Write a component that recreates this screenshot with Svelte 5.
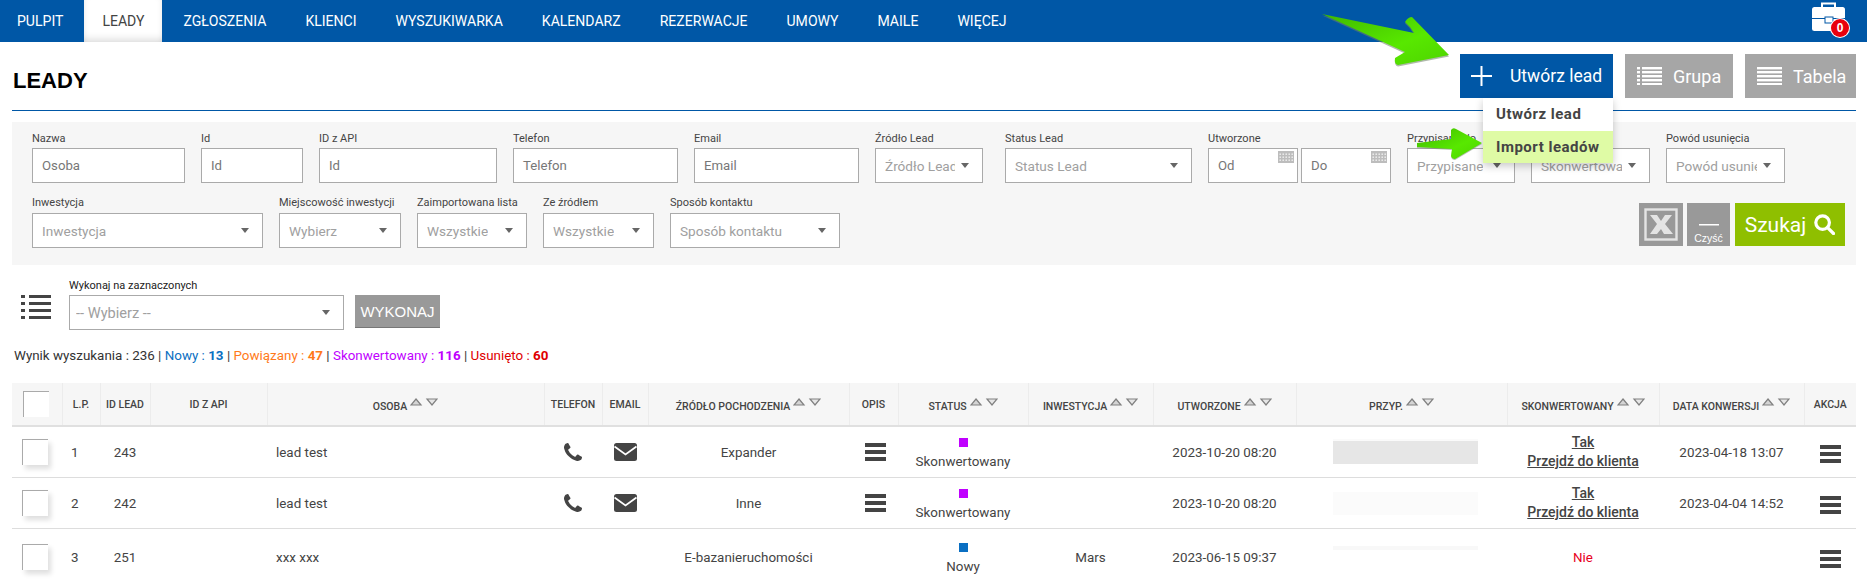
<script>
  const tabs = ['PULPIT','LEADY','ZGŁOSZENIA','KLIENCI','WYSZUKIWARKA','KALENDARZ','REZERWACJE','UMOWY','MAILE','WIĘCEJ'];
  const row1 = [
    {l:'Nazwa',p:'Osoba',w:153},{l:'Id',p:'Id',w:102},{l:'ID z API',p:'Id',w:178},{l:'Telefon',p:'Telefon',w:165},{l:'Email',p:'Email',w:165},
    {l:'Źródło Lead',p:'Źródło Lead',w:108,s:1},{l:'Status Lead',p:'Status Lead',w:187,s:1,cls:'push'}
  ];
  const row1b = [
    {l:'Przypisane do',p:'Przypisane',w:108,s:1},{l:'Skonwertowany',p:'Skonwertowany',w:119,s:1},{l:'Powód usunięcia',p:'Powód usunięcia',w:119,s:1}
  ];
  const row2 = [
    {l:'Inwestycja',p:'Inwestycja',w:231,s:1},{l:'Miejscowość inwestycji',p:'Wybierz',w:122,s:1},{l:'Zaimportowana lista',p:'Wszystkie',w:110,s:1},{l:'Ze źródłem',p:'Wszystkie',w:111,s:1},{l:'Sposób kontaktu',p:'Sposób kontaktu',w:170,s:1}
  ];
  const cols = [50,38,50,117,277,58,46,201,49,130,125,143,211,152,145,52];
  const heads = [
    {t:''},{t:'L.P.'},{t:'ID LEAD'},{t:'ID Z API'},{t:'OSOBA',s:1},{t:'TELEFON'},{t:'EMAIL'},{t:'ŹRÓDŁO POCHODZENIA',s:1},{t:'OPIS'},
    {t:'STATUS',s:1},{t:'INWESTYCJA',s:1},{t:'UTWORZONE',s:1},{t:'PRZYP.',s:1},{t:'SKONWERTOWANY',s:1},{t:'DATA KONWERSJI',s:1},{t:'AKCJA'}
  ];
  const rows = [
    {n:1,id:243,name:'lead test',contact:true,src:'Expander',opis:true,st:'Skonwertowany',c:'purple',inv:'',date:'2023-10-20 08:20',conv:true,cd:'2023-04-18 13:07',mask:'m1'},
    {n:2,id:242,name:'lead test',contact:true,src:'Inne',opis:true,st:'Skonwertowany',c:'purple',inv:'',date:'2023-10-20 08:20',conv:true,cd:'2023-04-04 14:52',mask:'m2'},
    {n:3,id:251,name:'xxx xxx',contact:false,src:'E-bazanieruchomości',opis:false,st:'Nowy',c:'azure',inv:'Mars',date:'2023-06-15 09:37',conv:false,cd:'',mask:'m3'}
  ];
</script>

{#snippet field(f)}
  <div class="field {f.cls || ''}" style="width:{f.w}px">
    <span class="lab">{f.l}</span>
    {#if f.s}
      <div class="inp sel"><span class="val">{f.p}</span><i class="caret"></i></div>
    {:else}
      <div class="inp"><span class="ph">{f.p}</span></div>
    {/if}
  </div>
{/snippet}

{#snippet bars(cls)}
  <svg class={cls} width="21" height="18" viewBox="0 0 21 18"><rect y="0" width="21" height="4" fill="#444"/><rect y="7" width="21" height="4" fill="#444"/><rect y="14" width="21" height="4" fill="#444"/></svg>
{/snippet}

{#snippet listIcon(w, bullets)}
  <svg width={w} height="18" viewBox="0 0 25 18" fill="#fff">
    {#each [0,4,8,12,16] as y}
      {#if bullets}
        <rect x="0" y={y} width="3" height="2.4"/><rect x="5" y={y} width="20" height="2.4"/>
      {:else}
        <rect x="0" y={y} width="25" height="2.4"/>
      {/if}
    {/each}
  </svg>
{/snippet}

<div class="page">
  <nav class="nav">
    {#each tabs as t}
      <a class="tab" class:active={t==='LEADY'} href="#top">{t}</a>
    {/each}
    <div class="case">
      <svg width="33" height="30" viewBox="0 0 33 30">
        <path d="M10 6V1.500h13V6" fill="none" stroke="#fff" stroke-width="2"/>
        <rect x="0" y="5" width="33" height="24" rx="2.5" fill="#fff"/>
        <rect x="0" y="16" width="33" height="1" fill="#0057a6"/>
        <rect x="13" y="15" width="8" height="6" fill="#fff" stroke="#0057a6" stroke-width="1"/>
      </svg>
      <span class="badge">0</span>
    </div>
  </nav>

  <div class="wrap">
    <header class="head">
      <h1>LEADY</h1>
      <div class="actions">
        <button class="big primary">
          <svg width="21" height="20" viewBox="0 0 21 20"><rect x="0" y="9" width="21" height="2" fill="#fff"/><rect x="9.5" y="0" width="2" height="20" fill="#fff"/></svg>
          <span class="utw">Utwórz lead</span>
        </button>
        <button class="big grey g1">{@render listIcon(25,true)}<span>Grupa</span></button>
        <button class="big grey g2">{@render listIcon(25,false)}<span>Tabela</span></button>
      </div>
    </header>

    <section class="filters">
      <div class="frow">
        {#each row1 as f}{@render field(f)}{/each}
        <div class="field dates">
          <span class="lab">Utworzone</span>
          <div class="dpair">
            {#each ['Od','Do'] as d}
              <div class="inp date"><span class="ph">{d}</span>
                <svg class="cal" width="16" height="12" viewBox="0 0 16 12">
                  <rect width="16" height="12" fill="#bdbdbd"/>
                  {#each [2,5,8,11,14] as x}{#each [3,6,9] as y}<rect x={x-0.5} y={y-0.5} width="1.4" height="1.4" fill="#f4f4f4"/>{/each}{/each}
                </svg>
              </div>
            {/each}
          </div>
        </div>
        {#each row1b as f}{@render field(f)}{/each}
      </div>
      <div class="frow second">
        {#each row2 as f}{@render field(f)}{/each}
        <div class="fbtns">
          <button class="sq xl" aria-label="Excel">
            <svg width="34" height="33" viewBox="0 0 34 33">
              <rect x="1.5" y="1.5" width="31" height="30" fill="none" stroke="#e4e4e4" stroke-width="2.4"/>
              <path d="M6 7h7l4 6 4-6h7l-7 9 8 10H20l-3-5-4 5H6l7-10z" fill="#e4e4e4"/>
            </svg>
          </button>
          <button class="sq clr"><i></i><span>Czyść</span></button>
          <button class="szukaj">Szukaj
            <svg width="21" height="21" viewBox="0 0 21 21" fill="none" stroke="#fff" stroke-width="3.2"><circle cx="8.6" cy="8.6" r="6.8"/><path d="M13.6 13.6L19.5 19.5" stroke-linecap="round"/></svg>
          </button>
        </div>
      </div>
    </section>

    <section class="bulk">
      <svg class="bicon" width="30" height="24" viewBox="0 0 30 24" fill="#444">
        {#each [0,7,14,21] as y}<rect x="0" y={y} width="4" height="3"/><rect x="8" y={y} width="22" height="3"/>{/each}
      </svg>
      <div class="field bfield">
        <span class="lab dark">Wykonaj na zaznaczonych</span>
        <div class="inp sel"><span class="val">-- Wybierz --</span><i class="caret"></i></div>
      </div>
      <button class="exec">WYKONAJ</button>
    </section>

    <p class="summary">
      Wynik wyszukania : 236 | <span class="cb">Nowy : <b>13</b></span> | <span class="co">Powiązany : <b>47</b></span> | <span class="cp">Skonwertowany : <b>116</b></span> | <span class="cr">Usunięto : <b>60</b></span>
    </p>

    <table class="tbl">
      <colgroup>{#each cols as c}<col style="width:{c}px">{/each}</colgroup>
      <thead>
        <tr>
          {#each heads as h, i}
            <th>
              {#if i===0}<span class="cb0 hcb"></span>
              {:else if h.s}
                <span class="sortable"><span class="st">{h.t}</span>
                  <svg width="28" height="8" viewBox="0 0 28 8">
                    <path d="M6 1L11 7H1z" fill="#d4d4d4" stroke="#808080" stroke-width="1.2"/>
                    <path d="M17 1H27L22 7z" fill="#e6e6e6" stroke="#808080" stroke-width="1.2"/>
                  </svg>
                </span>
              {:else}{h.t}{/if}
            </th>
          {/each}
        </tr>
      </thead>
      <tbody>
        {#each rows as r}
          <tr class:last={r.n===3}>
            <td class="cc"><span class="cb0 rcb"></span></td>
            <td class="lp">{r.n}</td>
            <td class="ctr">{r.id}</td>
            <td></td>
            <td class="nm">{r.name}</td>
            <td class="ctr">
              {#if r.contact}
                <svg class="ph-i" width="18" height="18" viewBox="192 128 1408 1408"><path d="M1600 1240q0 27-10 70.500t-21 68.500q-21 50-122 106-94 51-186 51-27 0-53-3.500t-57.500-12.500-47-14.500-55.500-20.500-49-18q-98-35-175-83-127-79-264-216t-216-264q-48-77-83-175-3-9-18-49t-20.500-55.500-14.500-47-12.500-57.500-3.500-53q0-92 51-186 56-101 106-122 25-11 68.500-21t70.500-10q14 0 21 3 18 6 53 76 11 19 30 54t35 63.500 31 53.500q3 4 17.500 25t21.500 35.500 7 28.500q0 20-28.500 50t-62 55-62 53-28.500 46q0 9 5 22.500t8.500 20.500 14 24 11.500 19q76 137 174 235t235 174q2 1 19 11.500t24 14 20.500 8.500 22.500 5q18 0 46-28.500t53-62 55-62 50-28.500q14 0 28.500 7t35.500 21.500 25 17.500q25 15 53.500 31t63.500 35 54 30q70 35 76 53 3 7 3 21z" fill="#444"/></svg>
              {/if}
            </td>
            <td class="ctr">
              {#if r.contact}
                <svg class="env" width="23" height="18" viewBox="0 0 23 18"><rect width="23" height="18" rx="2.5" fill="#444"/><path d="M0.500 3.500L11.500 11.500L22.500 3.500" fill="none" stroke="#fff" stroke-width="1.8"/></svg>
              {/if}
            </td>
            <td class="ctr">{r.src}</td>
            <td class="ctr ob-c">{#if r.opis}{@render bars('ob')}{/if}</td>
            <td class="ctr stat"><i class={r.c}></i><span>{r.st}</span></td>
            <td class="ctr">{r.inv}</td>
            <td class="ctr">{r.date}</td>
            <td class="ctr"><div class="mask {r.mask}"></div></td>
            <td class="ctr">
              {#if r.conv}<a class="tak" href="#top">Tak</a><a class="tak" href="#top">Przejdź do klienta</a>
              {:else}<span class="nie">Nie</span>{/if}
            </td>
            <td class="ctr">{r.cd}</td>
            <td class="ctr">{@render bars('ab')}</td>
          </tr>
        {/each}
      </tbody>
    </table>
  </div>

  <div class="menu">
    <div class="mi">Utwórz lead</div>
    <div class="mi on">Import leadów</div>
  </div>

  <svg class="arrows" width="1867" height="585" viewBox="0 0 1867 585">
    <defs>
      <linearGradient id="ga" x1="0" y1="0" x2="1" y2="1"><stop offset="0" stop-color="#3fb800"/><stop offset="0.6" stop-color="#58e800"/><stop offset="1" stop-color="#4ed400"/></linearGradient>
    </defs>
    <path d="M1322 14L1414 33Q1410 26 1405 22Q1408 17 1412 17L1449 55L1398 65Q1394 64 1395 58L1405 52Z" fill="#6f7f66" opacity=".55" transform="translate(0 1.500)"/>
    <path d="M1322 14L1414 33Q1410 26 1405 22Q1408 17 1412 17L1449 55L1398 65Q1394 64 1395 58L1405 52Z" fill="url(#ga)"/>
    <path d="M1417 143L1451 139L1451 130Q1453 127 1456 129L1482 143L1455 159Q1452 159 1451 156L1452 149L1417 147Z" fill="#6f7f66" opacity=".5" transform="translate(0 1)"/>
    <path d="M1417 143L1451 139L1451 130Q1453 127 1456 129L1482 143L1455 159Q1452 159 1451 156L1452 149L1417 147Z" fill="url(#ga)"/>
  </svg>
</div>

<style>
  :global(body){margin:0;overflow:hidden;background:#fff}
  .page{position:relative;width:1867px;height:585px;overflow:hidden;font-family:Roboto,"Liberation Sans",Arial,sans-serif;color:#444}
  .nav{display:flex;gap:3px;height:42px;background:#0057a6}
  .tab{padding:0 18px;line-height:42px;font-size:14.05px;color:#fff;text-decoration:none}
  .tab:first-child{padding-left:17px}
  .tab.active{background:#fff;color:#444;box-shadow:inset 0 -8px 8px -6px rgba(0,0,0,.16),inset 5px 0 6px -5px rgba(0,0,0,.08),inset -5px 0 6px -5px rgba(0,0,0,.08)}
  .case{position:relative;margin-left:auto;margin-right:22px;padding-top:2px}
  .badge{position:absolute;left:19px;top:19px;width:18px;height:18px;border-radius:50%;background:#e8000d;color:#fff;font:bold 12px/18px "Liberation Sans",sans-serif;text-align:center;box-shadow:0 0 0 1px #fff}

  .wrap{padding:0 11px 0 12px}
  .head{display:flex;justify-content:space-between;align-items:center;padding:12px 0 12px 1px;border-bottom:1px solid #0057a6;margin-bottom:11px}
  h1{margin:0;padding-top:9px;font:bold 22px/26px "Liberation Sans",sans-serif;color:#000}
  .actions{display:flex;gap:12px}
  .big{display:flex;align-items:center;height:44px;border:0;color:#fff;font:18px Roboto,sans-serif;padding:0}
  .primary{width:153px;background:#0057a6;padding-left:11px}
  .utw{margin-left:18px;font-size:17.5px}
  .grey{background:#a6a6a6;padding-left:12px}
  .g1{width:108px}
  .g2{width:111px}
  .grey span{margin-left:11px}

  .filters{background:#f6f6f6;height:143px;box-sizing:border-box;padding:10px 11px 0 20px}
  .frow{display:flex;gap:16px}
  .second{margin-top:13px;position:relative}
  .second .lab{margin-bottom:4px}
  .field{display:flex;flex-direction:column;flex:none}
  .push{margin-left:6px}
  .lab{font-size:11px;line-height:13px;margin-bottom:3px;color:#444;white-space:nowrap}
  .lab.dark{color:#222}
  .inp{box-sizing:border-box;height:35px;border:1px solid #aaa;background:#fff;display:flex;align-items:center;padding-left:9px;font-size:13.2px;position:relative;white-space:nowrap;overflow:hidden}
  .ph{color:#777}
  .sel{padding:0 27px 0 9px;font-size:13.6px}
  .bfield .sel{font-size:14.6px;padding-left:6px}
  .val{color:#a0a0a0;overflow:hidden;display:block;padding-top:1px}
  .caret{position:absolute;right:13px;top:14px;width:0;height:0;border:4px solid transparent;border-top:5px solid #666;border-bottom:0}
  .dpair{display:flex;gap:3px}
  .date{width:90px}
  .cal{position:absolute;right:3px;top:2px}
  .fbtns{margin-left:auto;display:flex;gap:4px;align-self:flex-end;margin-bottom:2px}
  .fbtns button{border:0;padding:0}
  .sq{background:#999;height:43px}
  .xl{width:44px;display:flex;align-items:center;justify-content:center}
  .clr{width:43px;color:#fff;display:flex;flex-direction:column;align-items:center;font-size:10.5px}
  .clr i{display:block;width:20px;height:1px;background:#fff;margin-top:21px;box-shadow:0 .5px 0 #fff}
  .clr span{margin-top:7px;line-height:12px}
  .szukaj{width:110px;height:43px;margin-left:1px;background:#8fbf00;color:#fff;font-family:Roboto,sans-serif;font-size:21px;display:flex;align-items:center;justify-content:center;gap:8px}

  .bulk{display:flex;align-items:flex-end;margin-top:14px}
  .bicon{margin:0 18px 11px 9px}
  .bfield{width:275px}
  .exec{margin:0 0 2px 11px;width:85px;height:33px;border:0;border-bottom:1px solid #777;background:#999;color:#fff;font:15px "Liberation Sans",sans-serif;padding:0}

  .summary{margin:18px 0 19px 2px;font-size:13.4px;line-height:16px;color:#333}
  .summary b{font-weight:700}
  .cb{color:#0a6fc2}.co{color:#ff7a1a}.cp{color:#c000ff}.cr{color:#e00000}

  .tbl{border-collapse:collapse;table-layout:fixed;width:1844px}
  th{height:42px;background:#f6f6f6;border-bottom:2px solid #e0e0e0;border-left:1px solid #ececec;font-size:10.5px;font-weight:500;color:#444;padding:0;white-space:nowrap;text-align:center}
  th:first-child{border-left:0}
  .sortable{display:inline-flex;align-items:center;gap:3px}
  .st{padding-top:5px}
  .sortable svg{margin-bottom:5px}
  td{height:50px;border-bottom:1px solid #ddd;font-size:13.4px;padding:0;color:#444;vertical-align:middle}
  tr.last td{height:56px;border-bottom:0}
  .ctr{text-align:center}
  .lp{padding-left:9px}
  .nm{padding-left:9px}
  .cb0{display:block;width:26px;height:26px;background:#fff;box-sizing:border-box;border-top:1px solid #aaa;border-left:1px solid #aaa}
  .hcb{margin-left:11px}
  .rcb{margin-left:10px;box-shadow:3px 4px 5px rgba(0,0,0,.13)}
  td svg{display:block;margin:0 auto}
  .ob-c{padding-left:3px}
  .ab{position:relative;top:2px}
  td.stat{padding-top:2px;height:48px}
  tr.last td.stat{height:54px}
  .stat i{display:block;width:9px;height:9px;margin:0 auto 7px}
  .stat span{display:block;line-height:15px}
  .purple{background:#c000ff}
  .azure{background:#0a6fc2}
  .tak{display:block;color:#444;font-weight:500;font-size:14px;line-height:19px;text-decoration:underline}
  .nie{color:#e8001c}
  .mask{margin:0 auto;width:145px;height:23px;margin-left:37px}
  .m1{background:#e6e6e6;box-shadow:0 -2px 0 -0px #fafafa}
  .m2{background:#fbfbfb}
  .m3{background:linear-gradient(#f8f8f8 0 4px,#fff 4px)}

  .menu{position:absolute;left:1483px;top:98px;width:130px;background:#fff;box-shadow:0 3px 8px rgba(0,0,0,.22)}
  .mi{height:32.500px;line-height:32px;padding-left:13px;font-weight:700;font-size:15px;letter-spacing:.5px;color:#444}
  .mi.on{background:#dffba5}
  .arrows{position:absolute;left:0;top:0;pointer-events:none}
</style>
